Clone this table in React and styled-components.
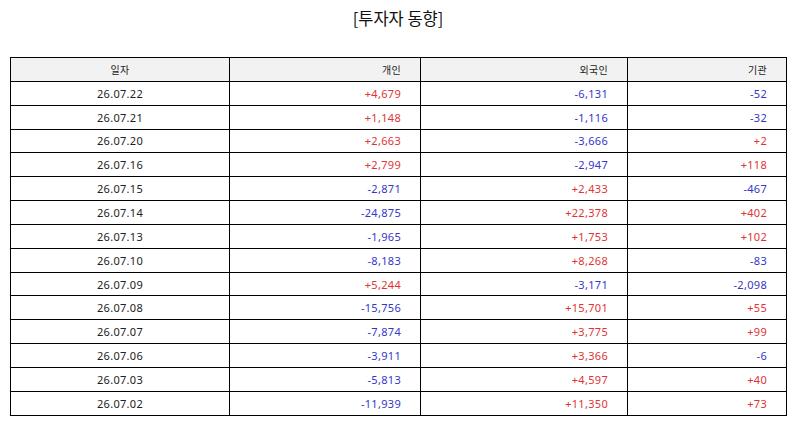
import React from 'react';
import styled, { createGlobalStyle } from 'styled-components';

const GlobalStyle = createGlobalStyle`
  html, body {
    margin: 0;
    padding: 0;
    background: #fff;
  }
  body {
    font-family: "Noto Sans", "Noto Sans CJK KR", sans-serif;
    color: #222;
  }
`;

const Page = styled.div`
  width: 795px;
  height: 425px;
  padding: 0 9px 0 10px;
  box-sizing: border-box;
`;

const Title = styled.h1`
  margin: 0;
  height: 57px;
  padding-top: 6px;
  box-sizing: border-box;
  text-align: center;
  font-size: 16.5px;
  font-weight: 400;
  color: #111;
  font-family: "Noto Sans CJK KR", sans-serif;
`;

const Table = styled.table`
  width: 776px;
  border-collapse: collapse;
  table-layout: fixed;
  font-size: 11px;
  letter-spacing: 0.3px;
  font-family: "Noto Sans", "Noto Sans CJK KR", sans-serif;
`;

const Cell = styled.td`
  border: 1.3px solid #000;
  height: 23.85px;
  padding: 0 ${p => (p.$align === 'center' ? 0 : 19)}px 0 0;
  box-sizing: border-box;
  text-align: ${p => p.$align || 'right'};
  color: ${p => (p.$tone === 'up' ? '#e03434' : p.$tone === 'down' ? '#3636c8' : '#222')};
  white-space: nowrap;
`;

const HeadCell = styled(Cell).attrs({ as: 'th' })`
  background: #f2f2f2;
  font-weight: 400;
  font-family: "Noto Sans CJK KR", sans-serif;
  font-size: 10px;
`;

const columns = [
  { key: 'date', label: '일자', width: 219 },
  { key: 'ind', label: '개인', width: 191 },
  { key: 'frn', label: '외국인', width: 207 },
  { key: 'inst', label: '기관', width: 159 },
];

const rows = [
  ['26.07.22', '+4,679', '-6,131', '-52'],
  ['26.07.21', '+1,148', '-1,116', '-32'],
  ['26.07.20', '+2,663', '-3,666', '+2'],
  ['26.07.16', '+2,799', '-2,947', '+118'],
  ['26.07.15', '-2,871', '+2,433', '-467'],
  ['26.07.14', '-24,875', '+22,378', '+402'],
  ['26.07.13', '-1,965', '+1,753', '+102'],
  ['26.07.10', '-8,183', '+8,268', '-83'],
  ['26.07.09', '+5,244', '-3,171', '-2,098'],
  ['26.07.08', '-15,756', '+15,701', '+55'],
  ['26.07.07', '-7,874', '+3,775', '+99'],
  ['26.07.06', '-3,911', '+3,366', '-6'],
  ['26.07.03', '-5,813', '+4,597', '+40'],
  ['26.07.02', '-11,939', '+11,350', '+73'],
];

const toneOf = v => (v.startsWith('+') ? 'up' : v.startsWith('-') ? 'down' : undefined);

const App = () => {
  return (
    <Page>
      <GlobalStyle />
      <Title>[투자자 동향]</Title>
      <Table>
        <colgroup>
          {columns.map(c => <col key={c.key} style={{ width: c.width }} />)}
        </colgroup>
        <thead>
          <tr>
            {columns.map((c, i) => (
              <HeadCell key={c.key} $align={i === 0 ? 'center' : 'right'}>{c.label}</HeadCell>
            ))}
          </tr>
        </thead>
        <tbody>
          {rows.map(r => (
            <tr key={r[0]}>
              <Cell $align="center">{r[0]}</Cell>
              {r.slice(1).map((v, i) => (
                <Cell key={i} $tone={toneOf(v)}>{v}</Cell>
              ))}
            </tr>
          ))}
        </tbody>
      </Table>
    </Page>
  );
}

export default App;
